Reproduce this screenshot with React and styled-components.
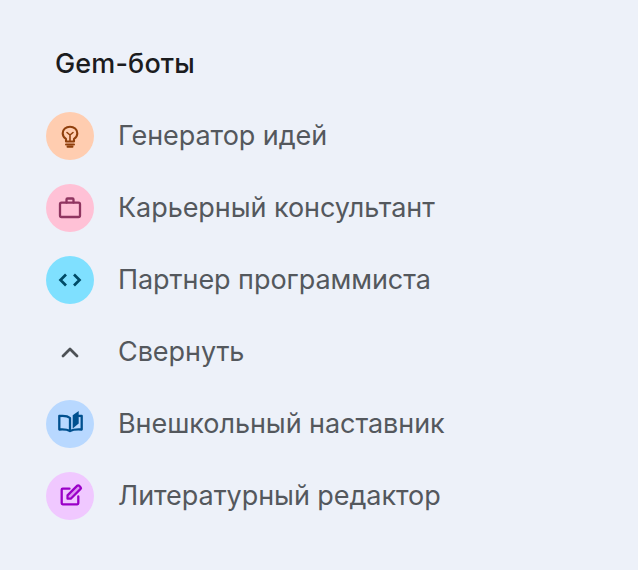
import React from "react";
import styled, { createGlobalStyle } from "styled-components";

const Global = createGlobalStyle`
  html, body { margin: 0; padding: 0; background: #edf1f9; }
  body { width: 638px; height: 570px; overflow: hidden; font-family: Inter, "Noto Sans", sans-serif; }
`;

const Panel = styled.main`
  display: flex;
  flex-direction: column;
  padding: 40px 0 0 46px;
`;

const Title = styled.h2`
  margin: 0 0 24px 9px;
  height: 48px;
  line-height: 47px;
  font-size: 27px;
  font-weight: 500;
  letter-spacing: 0.15px;
  color: #1b1c1e;
`;

const List = styled.ul`
  display: flex;
  flex-direction: column;
  gap: 24px;
  margin: 0;
  padding: 0;
  list-style: none;
`;

const Row = styled.li`
  display: flex;
  align-items: center;
  gap: 24px;
  height: 48px;
`;

const Badge = styled.span`
  display: flex;
  align-items: center;
  justify-content: center;
  width: 48px;
  height: 48px;
  border-radius: 50%;
  background: ${(p) => p.$bg || "transparent"};
  color: ${(p) => p.$fg};
`;

const Label = styled.span`
  padding-bottom: 2px;
  font-size: 27px;
  font-weight: 400;
  letter-spacing: -0.06px;
  color: #54585d;
  white-space: nowrap;
`;

const Icon = ({ children }) => (
  <svg width="28" height="28" viewBox="0 0 28 28" fill="none" stroke="currentColor" strokeWidth="2.3" strokeLinecap="round" strokeLinejoin="round">
    {children}
  </svg>
);

const Bulb = () => (
  <Icon>
    <path d="M10 19.500v-2.700C7.900 15.600 6.700 13.500 6.700 11.200 6.700 7.300 10 4.700 14 4.700s7.300 2.600 7.300 6.500c0 2.300-1.200 4.400-3.300 5.600v2.700z" strokeWidth="2.100" />
    <path d="M10 22.600h8M11.500 24.800h5" strokeWidth="2" />
    <path d="M11 10.500 14 13l3-2.500M14 13v5.500" strokeWidth="1.600" />
  </Icon>
);
const Case = () => (
  <Icon>
    <rect x="4" y="8.700" width="20" height="14.300" rx="1.500" />
    <path d="M10.500 8.500V5.500c0-.6.400-1 1-1h5c.6 0 1 .4 1 1v3" />
  </Icon>
);
const Code = () => (
  <Icon>
    <path d="M10 8.500 4.500 14l5.500 5.500M18 8.500 23.500 14 18 19.500" strokeWidth="2.700" strokeLinecap="butt" strokeLinejoin="miter" />
  </Icon>
);
const Chevron = () => (
  <Icon>
    <path d="M7 18l7-7 7 7" strokeWidth="2.800" />
  </Icon>
);
const Book = () => (
  <Icon>
    <path d="M14 21c-2.500-1.500-6.500-1.800-10.700-1.500V6c4.500-.5 8.500 0 10.700 2v13c2.800-1.500 7.500-1.800 11.700-1.500V6c-1-.1-2-.1-3-.1" />
    <path d="M16.700 5.200 22.700 1v12.500l-6 5z" fill="currentColor" stroke="none" />
  </Icon>
);
const Edit = () => (
  <Icon>
    <path d="M13.500 6.700H6.700c-.6 0-1 .4-1 1V21.300c0 .6.400 1 1 1h14.600c.6 0 1-.4 1-1V14.500" />
    <path d="M11.500 16.700V13.400L21.300 3.600c.5-.5 1.200-.5 1.700 0l1.600 1.600c.5.500.5 1.200 0 1.700L14.800 16.700z" strokeWidth="2.200" fill="currentColor" fillOpacity="0.25" />
  </Icon>
);

const items = [
  { label: "Генератор идей", bg: "#ffcdb0", fg: "#8f3f0c", icon: <Bulb /> },
  { label: "Карьерный консультант", bg: "#ffc1d6", fg: "#8f3560", icon: <Case /> },
  { label: "Партнер программиста", bg: "#7fe0ff", fg: "#004a66", icon: <Code /> },
  { label: "Свернуть", fg: "#4d5156", icon: <Chevron /> },
  { label: "Внешкольный наставник", bg: "#b8d8ff", fg: "#00508f", icon: <Book /> },
  { label: "Литературный редактор", bg: "#f0c8ff", fg: "#9a00c8", icon: <Edit /> },
];

export default function App() {
  return (
    <>
      <Global />
      <Panel>
        <Title>Gem-боты</Title>
        <List>
          {items.map((it) => (
            <Row key={it.label}>
              <Badge $bg={it.bg} $fg={it.fg}>{it.icon}</Badge>
              <Label>{it.label}</Label>
            </Row>
          ))}
        </List>
      </Panel>
    </>
  );
}
